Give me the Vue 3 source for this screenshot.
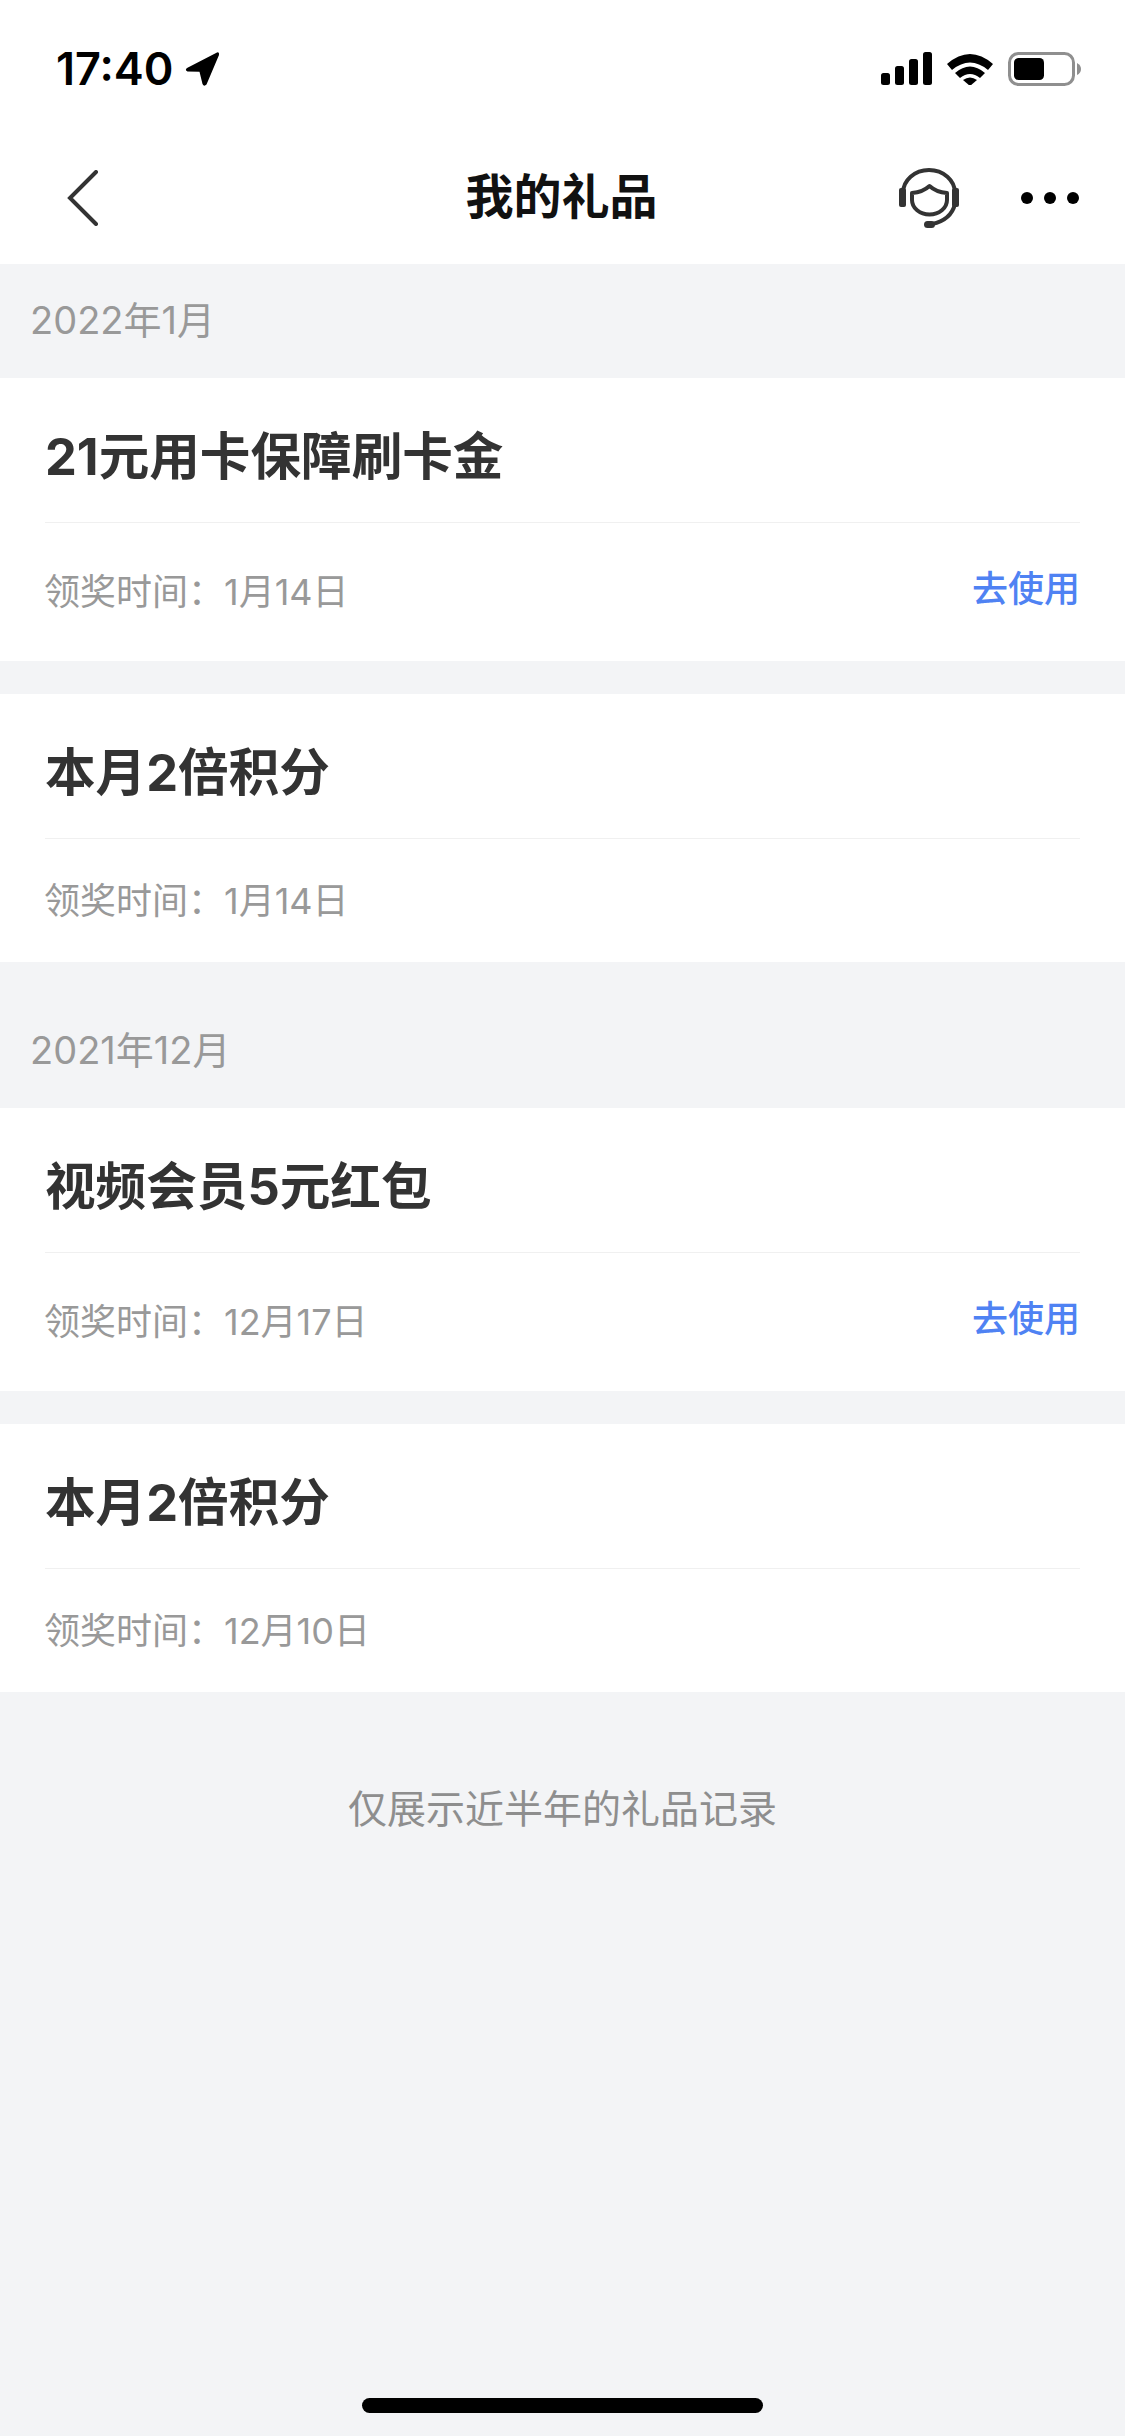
<script setup>
const groups = [
  {
    month: '2022年1月',
    gifts: [
      { name: '21元用卡保障刷卡金', date: '1月14日', usable: true },
      { name: '本月2倍积分', date: '1月14日', usable: false }
    ]
  },
  {
    month: '2021年12月',
    gifts: [
      { name: '视频会员5元红包', date: '12月17日', usable: true },
      { name: '本月2倍积分', date: '12月10日', usable: false }
    ]
  }
]
</script>

<template>
  <div class="page">
    <header class="top">
      <div class="status">
        <div class="clock">
          <span class="time">17:40</span>
          <svg class="arrow" width="36" height="36" viewBox="0 0 36 36">
            <path d="M33 1.500 L3 17 Q0.500 19 3.500 20.500 L15.500 20.800 L18.500 33 Q20 36 22.500 33.500 L35 4 Q35.500 0.500 33 1.500 Z" fill="#000" />
          </svg>
        </div>
        <div class="indicators">
          <svg width="51" height="33" viewBox="0 0 51 33">
            <rect x="0" y="21" width="9" height="12" rx="2.500" fill="#000" />
            <rect x="14" y="14" width="9" height="19" rx="2.500" fill="#000" />
            <rect x="28" y="7" width="9" height="26" rx="2.500" fill="#000" />
            <rect x="42" y="0" width="9" height="33" rx="2.500" fill="#000" />
          </svg>
          <svg width="46" height="33" viewBox="0 0 46 33">
            <path d="M0 12 Q23 -8 46 12 L41 18 Q23 3 5 18 Z" fill="#000" />
            <path d="M8 21 Q23 8 38 21 L33 26 Q23 18 13 26 Z" fill="#000" />
            <path d="M16 28 Q23 23 30 28 L23 34 Z" fill="#000" />
          </svg>
          <svg width="74" height="34" viewBox="0 0 74 34">
            <rect x="1.500" y="1.500" width="64" height="31" rx="9" fill="none" stroke="#8f8f8f" stroke-width="3" />
            <rect x="6" y="6" width="30" height="22" rx="4.500" fill="#000" />
            <path d="M69 11 Q73 13 73 17 Q73 21 69 23 Z" fill="#8f8f8f" />
          </svg>
        </div>
      </div>
      <nav class="nav">
        <svg class="back" width="32" height="56" viewBox="0 0 32 56">
          <path d="M29 2 L3 28 L29 54" fill="none" stroke="#333" stroke-width="4" stroke-linecap="round" stroke-linejoin="miter" />
        </svg>
        <h1 class="heading">我的礼品</h1>
        <div class="actions">
          <svg width="60" height="60" viewBox="0 0 60 60">
            <path d="M4 25 A26 23 0 0 1 56 25 L56 36 Q52 52 33 56" fill="none" stroke="#333" stroke-width="4" />
            <rect x="0" y="20" width="7" height="19" rx="2" fill="#333" />
            <rect x="53" y="20" width="7" height="19" rx="2" fill="#333" />
            <rect x="25" y="53" width="11" height="7" rx="3.500" fill="#333" />
            <path d="M13 25 Q24 24 30.500 18 Q37 24 48 25 L48 32 A17.500 14.500 0 0 1 13 32 Z" fill="none" stroke="#333" stroke-width="4" stroke-linejoin="round" />
          </svg>
          <div class="dots"><i></i><i></i><i></i></div>
        </div>
      </nav>
    </header>

    <section v-for="group in groups" :key="group.month">
      <div class="month">{{ group.month }}</div>
      <div class="list">
        <article v-for="gift in group.gifts" :key="gift.name + gift.date" class="card">
          <div class="name">{{ gift.name }}</div>
          <div class="meta" :class="{ 'meta-action': gift.usable }">
            <span class="date">领奖时间：{{ gift.date }}</span>
            <span v-if="gift.usable" class="use">去使用</span>
          </div>
        </article>
      </div>
    </section>

    <p class="note">仅展示近半年的礼品记录</p>
    <div class="home-bar"></div>
  </div>
</template>

<style>
html, body {
  margin: 0;
  background: #f3f4f6;
}
</style>

<style scoped>
.page {
  position: relative;
  width: 1125px;
  height: 2436px;
  overflow: hidden;
  background: #f3f4f6;
  font-family: "Inter", "Noto Sans CJK SC", sans-serif;
}
.top {
  height: 264px;
  background: #fff;
}
.status {
  height: 132px;
  padding: 5px 43px 0 56px;
  box-sizing: border-box;
  display: flex;
  align-items: center;
  justify-content: space-between;
}
.clock {
  display: flex;
  align-items: center;
  gap: 11px;
}
.time {
  font: 600 45px/1 "Inter", sans-serif;
  color: #000;
}
.arrow {
  display: block;
}
.indicators {
  display: flex;
  align-items: center;
  gap: 15px;
}
.indicators svg {
  display: block;
}
.nav {
  position: relative;
  height: 132px;
  display: flex;
  align-items: center;
  justify-content: space-between;
  padding: 0 46px 0 67px;
  box-sizing: border-box;
}
.back {
  display: block;
}
.heading {
  position: absolute;
  top: 32px;
  left: 0;
  right: 2px;
  margin: 0;
  text-align: center;
  font-size: 48px;
  line-height: 66px;
  font-weight: 700;
  color: #111;
}
.actions {
  display: flex;
  align-items: center;
  gap: 62px;
}
.actions svg {
  display: block;
}
.dots {
  display: flex;
  gap: 11px;
}
.dots i {
  width: 12px;
  height: 12px;
  border-radius: 50%;
  background: #000;
}
.month {
  height: 114px;
  padding-left: 30px;
  font-size: 38px;
  line-height: 112px;
  color: #999;
}
section + section .month {
  height: 146px;
  line-height: 176px;
}
.list {
  display: flex;
  flex-direction: column;
  gap: 33px;
}
.card {
  background: #fff;
  padding-left: 45px;
  padding-right: 45px;
}
.name {
  height: 144px;
  border-bottom: 1px solid #f0f0f0;
  font-size: 50.6px;
  line-height: 158px;
  font-weight: 700;
  color: #333;
}
.meta {
  height: 123px;
  box-sizing: border-box;
  padding-bottom: 6px;
  display: flex;
  align-items: center;
  justify-content: space-between;
}
.meta-action {
  height: 138px;
}
.date {
  font-size: 36px;
  margin-left: -1px;
  color: #999;
}
.use {
  margin-bottom: 6px;
  font-size: 36px;
  font-weight: 500;
  color: #4f82f3;
}
.note {
  margin: 0;
  padding-top: 82px;
  text-align: center;
  font-size: 39px;
  line-height: 70px;
  color: #8e8e8e;
}
.home-bar {
  position: absolute;
  left: 362px;
  bottom: 23px;
  width: 401px;
  height: 15px;
  border-radius: 8px;
  background: #000;
}
</style>
